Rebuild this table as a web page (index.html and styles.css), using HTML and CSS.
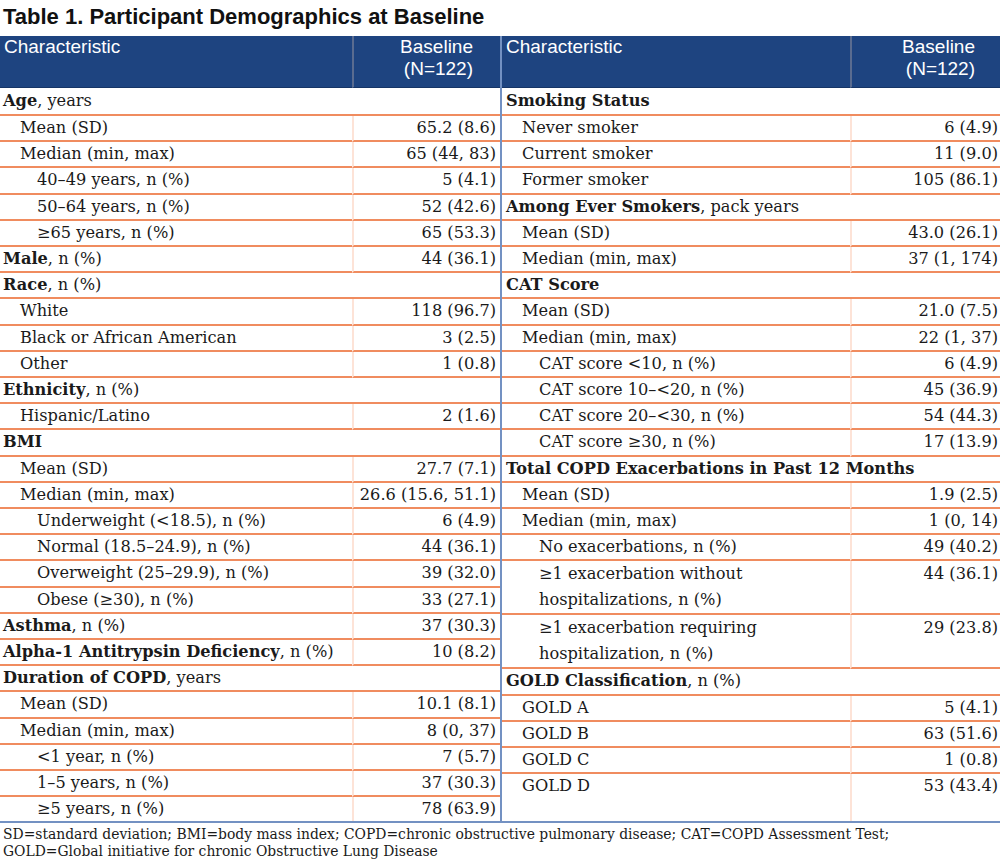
FILE: index.html
```html
<!DOCTYPE html>
<html lang="en">
<head>
<meta charset="utf-8">
<title>Table 1. Participant Demographics at Baseline</title>
<link rel="stylesheet" href="styles.css">
</head>
<body>
<h1 class="title">Table 1. Participant Demographics at Baseline</h1>
<div class="tables">
  <table class="t t-left">
    <colgroup><col class="c1"><col class="c2"></colgroup>
    <thead>
      <tr><th class="h-label">Characteristic</th><th class="h-val">Baseline<br>(N=122)</th></tr>
    </thead>
    <tbody>
      <tr class="first"><td colspan="2" class="cat"><b>Age</b>, years</td></tr>
      <tr><td class="l1">Mean (SD)</td><td class="v">65.2 (8.6)</td></tr>
      <tr><td class="l1">Median (min, max)</td><td class="v">65 (44, 83)</td></tr>
      <tr><td class="l2">40–49 years, n (%)</td><td class="v">5 (4.1)</td></tr>
      <tr><td class="l2">50–64 years, n (%)</td><td class="v">52 (42.6)</td></tr>
      <tr><td class="l2">≥65 years, n (%)</td><td class="v">65 (53.3)</td></tr>
      <tr><td class="l0"><b>Male</b>, n (%)</td><td class="v">44 (36.1)</td></tr>
      <tr><td colspan="2" class="cat"><b>Race</b>, n (%)</td></tr>
      <tr><td class="l1">White</td><td class="v">118 (96.7)</td></tr>
      <tr><td class="l1">Black or African American</td><td class="v">3 (2.5)</td></tr>
      <tr><td class="l1">Other</td><td class="v">1 (0.8)</td></tr>
      <tr><td colspan="2" class="cat"><b>Ethnicity</b>, n (%)</td></tr>
      <tr><td class="l1">Hispanic/Latino</td><td class="v">2 (1.6)</td></tr>
      <tr><td colspan="2" class="cat"><b>BMI</b></td></tr>
      <tr><td class="l1">Mean (SD)</td><td class="v">27.7 (7.1)</td></tr>
      <tr><td class="l1">Median (min, max)</td><td class="v">26.6 (15.6, 51.1)</td></tr>
      <tr><td class="l2">Underweight (&lt;18.5), n (%)</td><td class="v">6 (4.9)</td></tr>
      <tr><td class="l2">Normal (18.5–24.9), n (%)</td><td class="v">44 (36.1)</td></tr>
      <tr><td class="l2">Overweight (25–29.9), n (%)</td><td class="v">39 (32.0)</td></tr>
      <tr><td class="l2">Obese (≥30), n (%)</td><td class="v">33 (27.1)</td></tr>
      <tr><td class="l0"><b>Asthma</b>, n (%)</td><td class="v">37 (30.3)</td></tr>
      <tr><td class="l0"><b>Alpha-1 Antitrypsin Deficiency</b>, n (%)</td><td class="v">10 (8.2)</td></tr>
      <tr><td colspan="2" class="cat"><b>Duration of COPD</b>, years</td></tr>
      <tr><td class="l1">Mean (SD)</td><td class="v">10.1 (8.1)</td></tr>
      <tr><td class="l1">Median (min, max)</td><td class="v">8 (0, 37)</td></tr>
      <tr><td class="l2">&lt;1 year, n (%)</td><td class="v">7 (5.7)</td></tr>
      <tr><td class="l2">1–5 years, n (%)</td><td class="v">37 (30.3)</td></tr>
      <tr class="last"><td class="l2">≥5 years, n (%)</td><td class="v">78 (63.9)</td></tr>
    </tbody>
  </table>
  <table class="t t-right">
    <colgroup><col class="c1"><col class="c2"></colgroup>
    <thead>
      <tr><th class="h-label">Characteristic</th><th class="h-val">Baseline<br>(N=122)</th></tr>
    </thead>
    <tbody>
      <tr class="first"><td colspan="2" class="cat"><b>Smoking Status</b></td></tr>
      <tr><td class="l1">Never smoker</td><td class="v">6 (4.9)</td></tr>
      <tr><td class="l1">Current smoker</td><td class="v">11 (9.0)</td></tr>
      <tr><td class="l1">Former smoker</td><td class="v">105 (86.1)</td></tr>
      <tr><td colspan="2" class="cat"><b>Among Ever Smokers</b>, pack years</td></tr>
      <tr><td class="l1">Mean (SD)</td><td class="v">43.0 (26.1)</td></tr>
      <tr><td class="l1">Median (min, max)</td><td class="v">37 (1, 174)</td></tr>
      <tr><td colspan="2" class="cat"><b>CAT Score</b></td></tr>
      <tr><td class="l1">Mean (SD)</td><td class="v">21.0 (7.5)</td></tr>
      <tr><td class="l1">Median (min, max)</td><td class="v">22 (1, 37)</td></tr>
      <tr><td class="l2">CAT score &lt;10, n (%)</td><td class="v">6 (4.9)</td></tr>
      <tr><td class="l2">CAT score 10–&lt;20, n (%)</td><td class="v">45 (36.9)</td></tr>
      <tr><td class="l2">CAT score 20–&lt;30, n (%)</td><td class="v">54 (44.3)</td></tr>
      <tr><td class="l2">CAT score ≥30, n (%)</td><td class="v">17 (13.9)</td></tr>
      <tr><td colspan="2" class="cat"><b>Total COPD Exacerbations in Past 12 Months</b></td></tr>
      <tr><td class="l1">Mean (SD)</td><td class="v">1.9 (2.5)</td></tr>
      <tr><td class="l1">Median (min, max)</td><td class="v">1 (0, 14)</td></tr>
      <tr><td class="l2">No exacerbations, n (%)</td><td class="v">49 (40.2)</td></tr>
      <tr class="two"><td class="l2">≥1 exacerbation without<br>hospitalizations, n (%)</td><td class="v">44 (36.1)</td></tr>
      <tr class="two"><td class="l2">≥1 exacerbation requiring<br>hospitalization, n (%)</td><td class="v">29 (23.8)</td></tr>
      <tr><td colspan="2" class="cat"><b>GOLD Classification</b>, n (%)</td></tr>
      <tr><td class="l1">GOLD A</td><td class="v">5 (4.1)</td></tr>
      <tr><td class="l1">GOLD B</td><td class="v">63 (51.6)</td></tr>
      <tr><td class="l1">GOLD C</td><td class="v">1 (0.8)</td></tr>
      <tr class="open"><td class="l1">GOLD D</td><td class="v">53 (43.4)</td></tr>
      <tr class="fill"><td></td><td class="v"></td></tr>
    </tbody>
  </table>
</div>
<p class="foot">SD=standard deviation; BMI=body mass index; COPD=chronic obstructive pulmonary disease; CAT=COPD Assessment Test;<br>GOLD=Global initiative for chronic Obstructive Lung Disease</p>
</body>
</html>
```
FILE: styles.css
```css
html, body {
  margin: 0;
  padding: 0;
  background: #ffffff;
  color: #1a1a1a;
}

body {
  width: 1000px;
  font-family: "DejaVu Serif", "Liberation Serif", serif;
}

.title {
  margin: 0 0 6px 0;
  padding: 4px 0 0 3px;
  font-family: "Liberation Sans", Arial, sans-serif;
  font-weight: bold;
  font-size: 22px;
  line-height: 26px;
  color: #111111;
}

.tables {
  display: flex;
  align-items: flex-start;
  border-bottom: 2px solid #7391c2;
  width: 1000px;
}

.t {
  border-collapse: separate;
  border-spacing: 0;
  table-layout: fixed;
  font-size: 16.2px;
}

.t-left {
  width: 502px;
  border-right: 2px solid #7391c2;
}
.t-left .c1 { width: 352px; }
.t-left .c2 { width: 148px; }

.t-right {
  width: 498px;
}
.t-right .c1 { width: 348px; }
.t-right .c2 { width: 150px; }

.t th {
  background: #1e4480;
  color: #ffffff;
  font-family: "Liberation Sans", Arial, sans-serif;
  font-weight: normal;
  font-size: 19px;
  line-height: 22px;
  vertical-align: top;
  height: 52px;
  padding: 0 0 0 4px;
  text-align: left;
  box-sizing: border-box;
  border-bottom: 1px solid #163566;
}

.t th.h-val {
  text-align: right;
  padding-right: 27px;
  border-left: 2px solid #5a6c90;
}
.t-right th.h-val { padding-right: 25px; }

.t-right th.h-label {
  padding-left: 4px;
}

.t td {
  line-height: 24.2px;
  padding: 0 3px;
  border-bottom: 2px solid #f08c5f;
  white-space: nowrap;
  vertical-align: top;
}

.t tr.first td { line-height: 26px; }

.t td.v {
  text-align: right;
  padding-right: 4px;
  border-left: 2px solid #fde3d7;
}
.t-right td.v { padding-right: 2px; }

.t td.cat b,
.t td.l0 b {
  font-weight: bold;
}

.t td.l0 { padding-left: 3px; }
.t td.l1 { padding-left: 20px; }
.t td.l2 { padding-left: 37px; }

.t-right td.cat,
.t-right td.l0 { padding-left: 4px; }
.t-right td.l1 { padding-left: 20px; }
.t-right td.l2 { padding-left: 37px; }

.t tr.two td { line-height: 26px; }

.t tr.last td,
.t tr.open td,
.t tr.fill td { border-bottom: none; }

.t tr.fill td { height: 23px; }

.foot {
  margin: 0;
  padding: 3px 0 0 3px;
  font-family: "DejaVu Serif", "Liberation Serif", serif;
  font-size: 13.9px;
  line-height: 16.5px;
  white-space: nowrap;
}
```
